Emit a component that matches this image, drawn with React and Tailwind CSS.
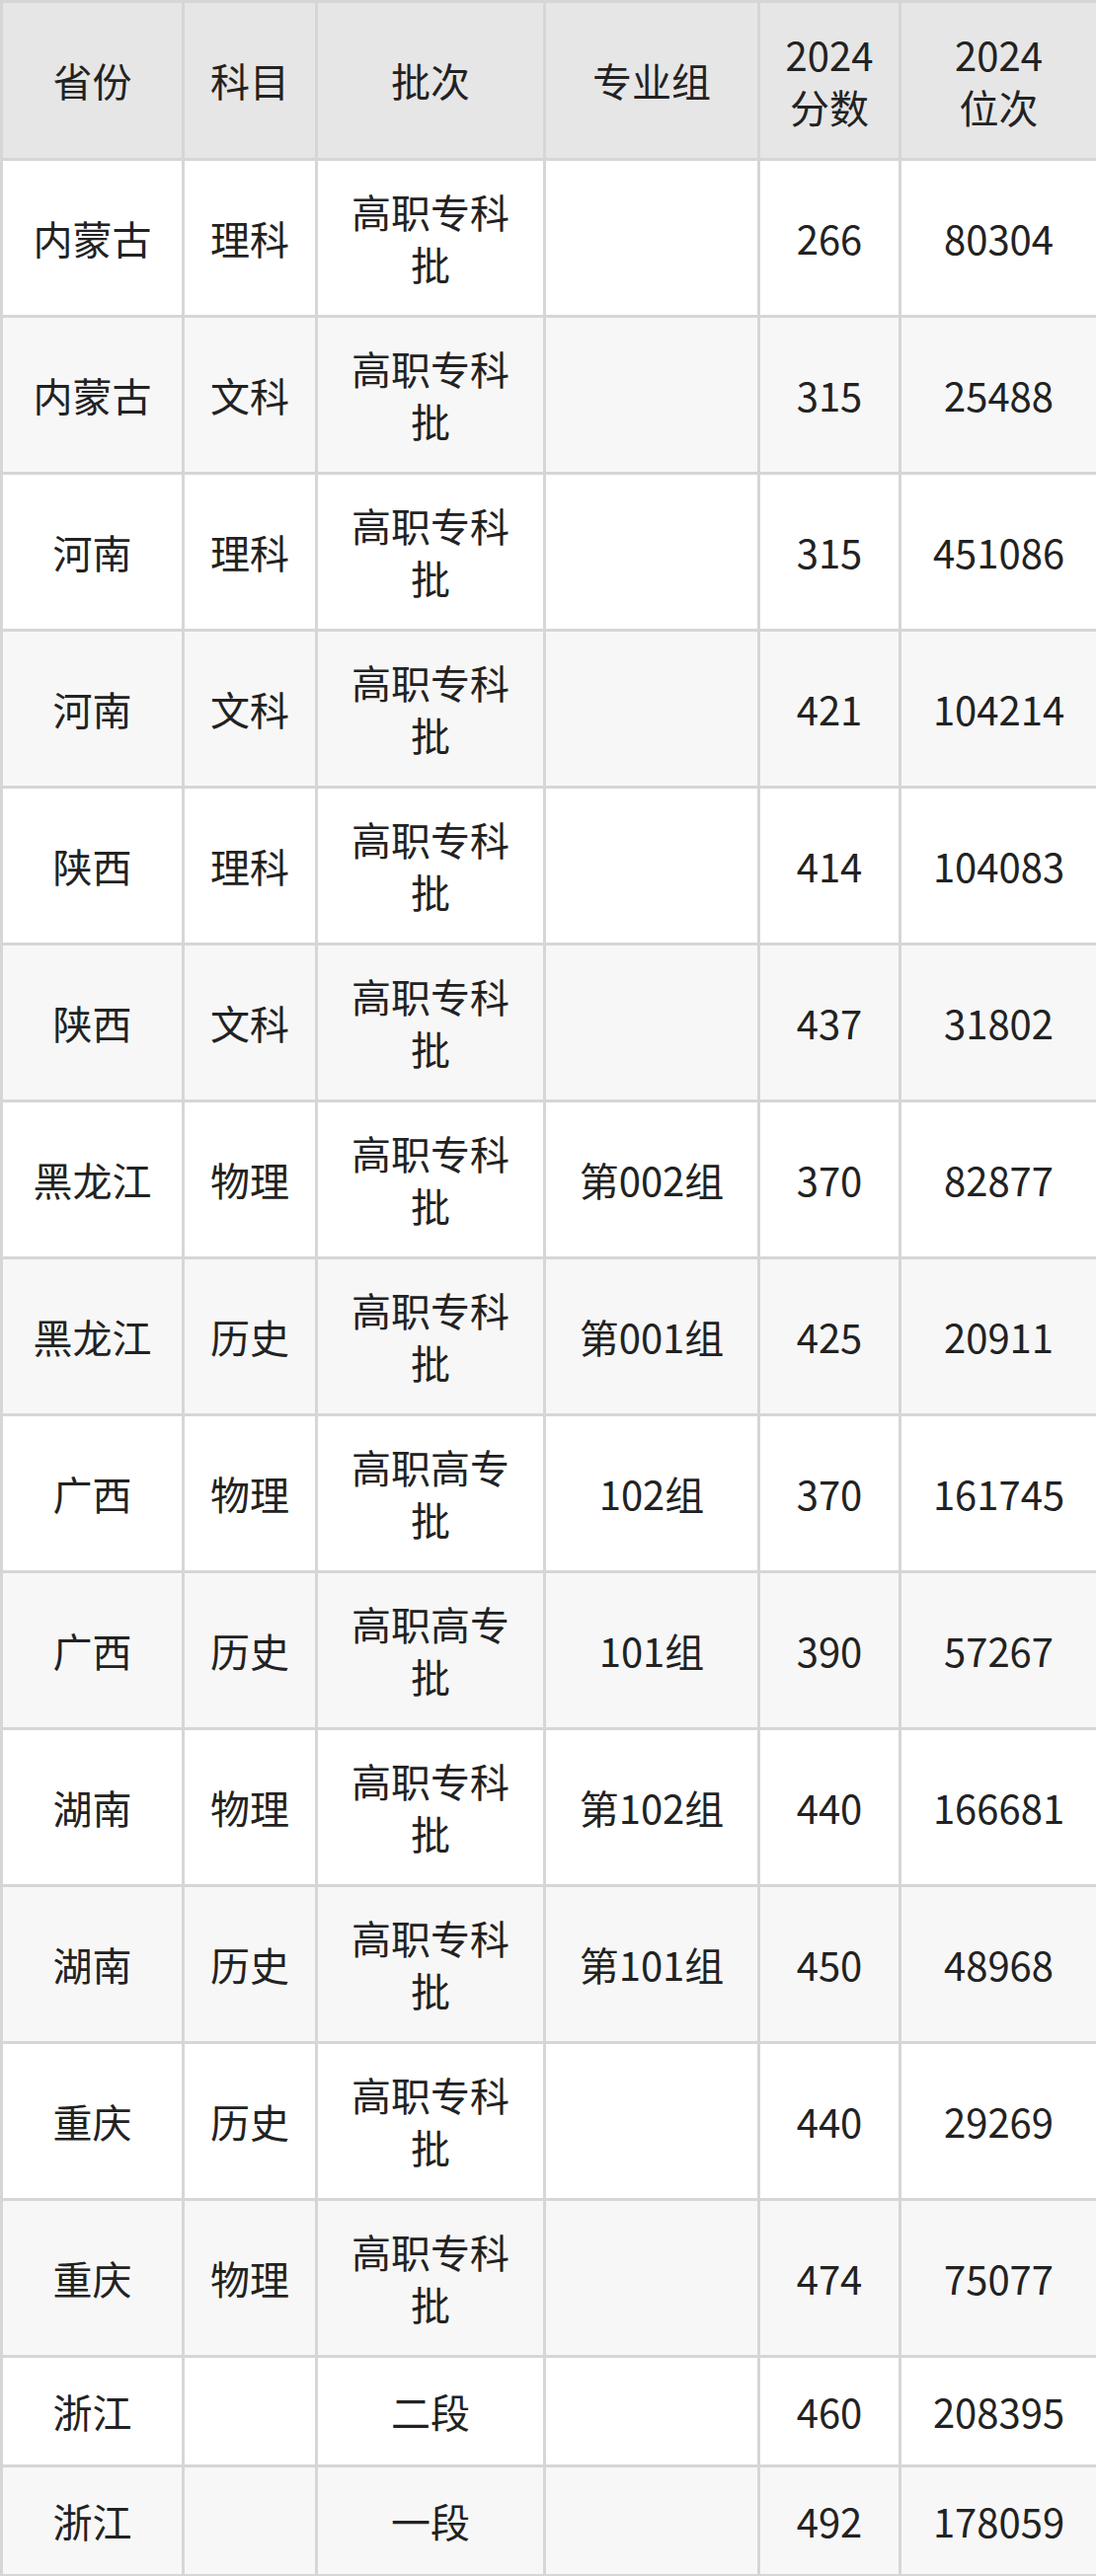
import React from 'react';

const ROWS = [
  ['内蒙古', '理科', '高职专科批', '', '266', '80304'],
  ['内蒙古', '文科', '高职专科批', '', '315', '25488'],
  ['河南', '理科', '高职专科批', '', '315', '451086'],
  ['河南', '文科', '高职专科批', '', '421', '104214'],
  ['陕西', '理科', '高职专科批', '', '414', '104083'],
  ['陕西', '文科', '高职专科批', '', '437', '31802'],
  ['黑龙江', '物理', '高职专科批', '第002组', '370', '82877'],
  ['黑龙江', '历史', '高职专科批', '第001组', '425', '20911'],
  ['广西', '物理', '高职高专批', '102组', '370', '161745'],
  ['广西', '历史', '高职高专批', '101组', '390', '57267'],
  ['湖南', '物理', '高职专科批', '第102组', '440', '166681'],
  ['湖南', '历史', '高职专科批', '第101组', '450', '48968'],
  ['重庆', '历史', '高职专科批', '', '440', '29269'],
  ['重庆', '物理', '高职专科批', '', '474', '75077'],
  ['浙江', '', '二段', '', '460', '208395'],
  ['浙江', '', '一段', '', '492', '178059'],
];

const HEAD = [['省份'], ['科目'], ['批次'], ['专业组'], ['2024', '分数'], ['2024', '位次']];

export default function App() {
  return (
    <div className="w-[1110px] bg-white" style={{ fontFamily: '"Noto Sans CJK SC", "Noto Sans", sans-serif' }}>
      <table className="w-[1110px] table-fixed border-collapse text-[40px] leading-[53px] text-[#222]">
        <colgroup>
          <col className="w-[184px]" />
          <col className="w-[135px]" />
          <col className="w-[231px]" />
          <col className="w-[217px]" />
          <col className="w-[143px]" />
          <col className="w-[200px]" />
        </colgroup>
        <thead>
          <tr className="h-[160px] bg-[#e6e6e6]">
            {HEAD.map((h, i) => (
              <th key={i} className="border-[3px] border-[#d6d6d6] px-[22px] text-center font-normal">
                {h.map((line, k) => (
                  <div key={k}>{line}</div>
                ))}
              </th>
            ))}
          </tr>
        </thead>
        <tbody>
          {ROWS.map((r, i) => (
            <tr
              key={i}
              className={`${i >= 14 ? 'h-[111px]' : 'h-[159px]'} ${i % 2 === 1 ? 'bg-[#f7f7f7]' : 'bg-white'}`}
            >
              {r.map((c, j) => (
                <td key={j} className="border-[3px] border-[#d6d6d6] px-[22px] text-center align-middle">
                  {c}
                </td>
              ))}
            </tr>
          ))}
        </tbody>
      </table>
    </div>
  );
}
